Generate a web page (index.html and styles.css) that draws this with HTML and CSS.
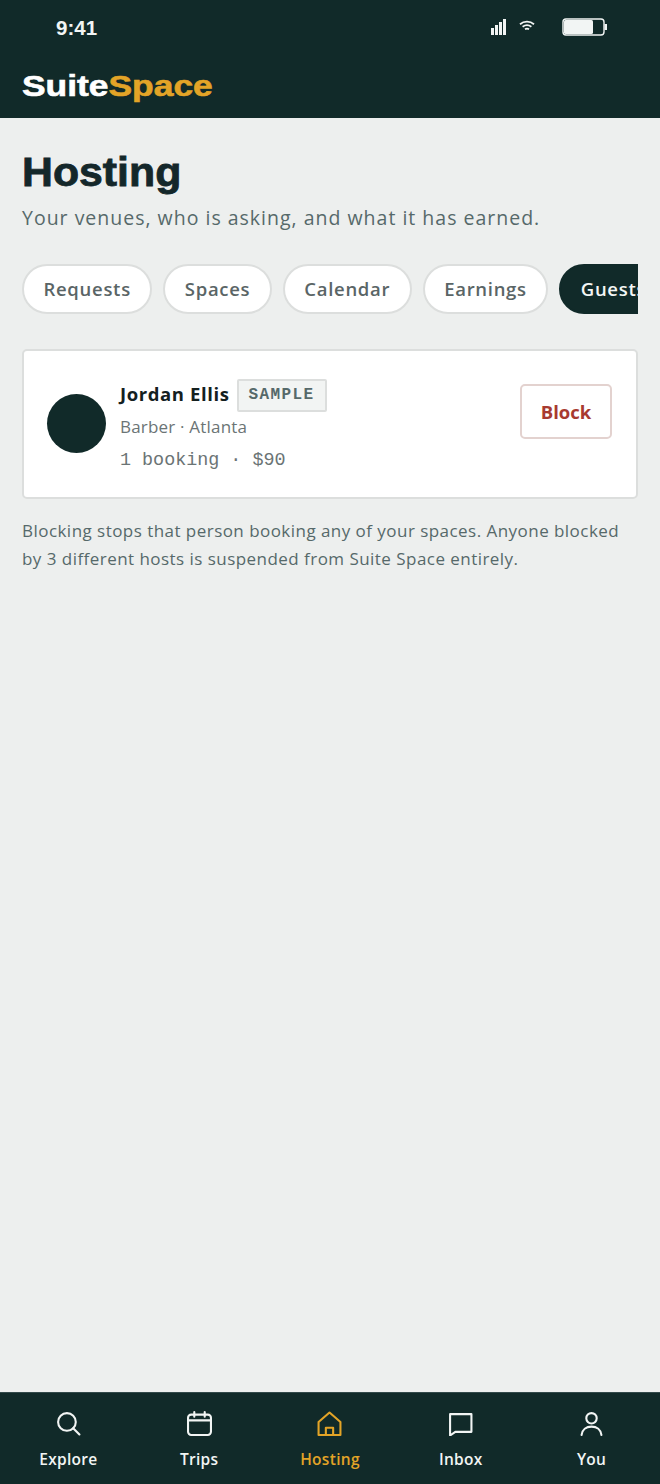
FILE: index.html
```html
<!DOCTYPE html>
<html lang="en">
<head>
    <meta charset="UTF-8">
    <meta name="viewport" content="width=device-width, initial-scale=1.0">
    <title>Hosting</title>
    <link rel="stylesheet" href="styles.css">
</head>
<body>
    <div class="app">
        <header class="top">
            <div class="status">
                <span class="time">9:41</span>
                <div class="status-icons">
                    <svg class="signal" width="16" height="16" viewBox="0 0 16 16"><path d="M0 9h3v7H0zM4 6h3v10H4zM8 3h3v13H8zM12 0h3v16h-3z" fill="#f2f5f4"/></svg>
                    <svg class="wifi" width="16" height="12" viewBox="0 0 16 12" fill="none" stroke="#f2f5f4" stroke-width="1.8"><path d="M1 4.200c4-3.400 10-3.400 14 0"/><path d="M3.600 6.800c2.600-2 6.200-2 8.800 0"/><path d="M6 9.300c1.200-.8 2.800-.8 4 0"/></svg>
                    <svg class="battery" width="45" height="18" viewBox="0 0 45 18"><rect x="1" y="1" width="41" height="16" rx="3" fill="none" stroke="#f2f5f4" stroke-width="1.4"/><rect x="2" y="2" width="29" height="14" rx="1.500" fill="#f2f5f4"/><path d="M42.500 6h2.500v6h-2.500z" fill="#f2f5f4"/></svg>
                </div>
            </div>
            <div class="brand"><span class="brand-inner">Suite<span class="brand-accent">Space</span></span></div>
        </header>

        <main class="content">
            <h1 class="title"><span class="title-inner">Hosting</span></h1>
            <p class="subtitle">Your venues, who is asking, and what it has earned.</p>

            <div class="tabs">
                <span class="tab">Requests</span>
                <span class="tab">Spaces</span>
                <span class="tab">Calendar</span>
                <span class="tab">Earnings</span>
                <span class="tab tab-active">Guests</span>
            </div>

            <section class="card">
                <div class="avatar"></div>
                <div class="guest">
                    <div class="guest-head">
                        <span class="guest-name">Jordan Ellis</span>
                        <span class="badge">SAMPLE</span>
                    </div>
                    <div class="guest-role">Barber · Atlanta</div>
                    <div class="guest-stats">1 booking · $90</div>
                </div>
                <button class="block-btn" type="button">Block</button>
            </section>

            <p class="note">Blocking stops that person booking any of your spaces. Anyone blocked by 3 different hosts is suspended from Suite Space entirely.</p>
        </main>

        <nav class="nav">
            <a class="nav-item">
                <svg viewBox="0 0 24 24"><circle cx="10.500" cy="10.500" r="8.500"/><path d="M16.500 16.500l6 6"/></svg>
                <span>Explore</span>
            </a>
            <a class="nav-item">
                <svg viewBox="0 0 24 24"><rect x="1" y="3.500" width="22" height="19.500" rx="3"/><path d="M1 9h22M7 1v4.500M17 1v4.500"/></svg>
                <span>Trips</span>
            </a>
            <a class="nav-item nav-active">
                <svg viewBox="0 0 24 24"><path d="M1.500 23V10.500L12 1.500l10.500 9V23z"/><path d="M8.500 23v-7h7v7"/></svg>
                <span>Hosting</span>
            </a>
            <a class="nav-item">
                <svg viewBox="0 0 24 24"><path d="M2 3h20.500v17H7l-5 3.500z"/></svg>
                <span>Inbox</span>
            </a>
            <a class="nav-item">
                <svg viewBox="0 0 24 24"><circle cx="12" cy="7" r="5"/><path d="M2.500 23c.5-5 4.500-8 9.500-8s9 3 9.500 8"/></svg>
                <span>You</span>
            </a>
        </nav>
    </div>
</body>
</html>
```

FILE: styles.css
```css
* {
    box-sizing: border-box;
}
body {
    margin: 0;
    font-family: "Open Sans", "Lato", sans-serif;
    background-color: #edefee;
    color: #14272a;
}
.app {
    width: 660px;
    height: 1484px;
    display: flex;
    flex-direction: column;
}
.top {
    height: 118px;
    background-color: #112a29;
    padding: 0 22px;
    flex: none;
}
.status {
    height: 68px;
    padding: 14px 31px 0 34px;
    display: flex;
    justify-content: space-between;
    align-items: flex-start;
}
.time {
    font-family: "Liberation Sans", Arial, sans-serif;
    font-weight: 700;
    font-size: 20.500px;
    line-height: 28px;
    color: #f2f5f4;
}
.status-icons {
    display: flex;
    align-items: center;
    height: 26px;
}
.signal {
    margin-right: 12px;
}
.wifi {
    margin-right: 27px;
    margin-top: -3px;
}
.brand {
    font-family: "Liberation Sans", Arial, sans-serif;
    font-weight: 700;
    font-size: 29px;
    line-height: 36px;
    color: #fff;
}
.brand-inner {
    display: inline-block;
    transform: scaleX(1.22);
    transform-origin: left center;
    -webkit-text-stroke: 0.6px currentColor;
}
.brand-accent {
    color: #e3a427;
}
.content {
    flex: 1;
    padding: 30px 22px 0;
}
.title {
    margin: 0;
    font-family: "Liberation Sans", Arial, sans-serif;
    font-weight: 700;
    font-size: 40px;
    line-height: 48px;
    color: #14272a;
}
.title-inner {
    display: inline-block;
    transform: scaleX(1.07);
    transform-origin: left center;
    -webkit-text-stroke: 0.8px currentColor;
}
.subtitle {
    margin: 8px 0 0;
    font-size: 19.500px;
    line-height: 28px;
    letter-spacing: 1px;
    color: #56696a;
}
.tabs {
    display: flex;
    gap: 11px;
    margin-top: 32px;
    height: 50px;
    overflow: hidden;
}
.tab {
    flex: none;
    height: 50px;
    padding: 0 19.500px;
    border: 2px solid #dcdedd;
    border-radius: 25px;
    background-color: #fff;
    font-size: 18.500px;
    font-weight: 600;
    line-height: 46px;
    letter-spacing: 0.7px;
    color: #5a6566;
}
.tab-active {
    background-color: #112a29;
    border-color: #112a29;
    color: #f4f6f5;
}
.card {
    display: flex;
    align-items: flex-start;
    height: 150px;
    margin-top: 35px;
    padding: 28px 24px 0 23px;
    background-color: #fff;
    border: 2px solid #dcdedd;
    border-radius: 5px;
}
.avatar {
    width: 59px;
    height: 59px;
    margin-top: 15px;
    border-radius: 50%;
    background-color: #112a29;
    flex: none;
}
.guest {
    flex: 1;
    margin-left: 14px;
}
.guest-head {
    display: flex;
    align-items: center;
    gap: 7px;
}
.guest-name {
    margin-bottom: 4px;
    font-size: 18.500px;
    font-weight: 700;
    letter-spacing: 0.6px;
    color: #14201f;
}
.badge {
    font-family: "Liberation Mono", monospace;
    font-weight: 700;
    font-size: 16px;
    line-height: 29px;
    height: 33px;
    padding: 0 10px;
    letter-spacing: 1.400px;
    color: #56696a;
    background-color: #f2f4f3;
    border: 2px solid #dcdedd;
    border-radius: 2px;
}
.guest-role {
    margin-top: 2px;
    font-size: 17px;
    line-height: 26px;
    letter-spacing: 0.2px;
    color: #6b7475;
}
.guest-stats {
    margin-top: 8px;
    font-family: "Liberation Mono", monospace;
    font-size: 18.400px;
    line-height: 26px;
    color: #6b7475;
}
.block-btn {
    width: 92px;
    height: 55px;
    margin-top: 5px;
    padding: 0;
    flex: none;
    background-color: #fff;
    border: 2px solid #e3d2cf;
    border-radius: 5px;
    font-family: inherit;
    font-size: 18.500px;
    font-weight: 700;
    color: #a83a30;
}
.note {
    margin: 18px 0 0;
    font-size: 17px;
    line-height: 28px;
    letter-spacing: 0.46px;
    color: #56696a;
}
.nav {
    flex: none;
    height: 92px;
    display: grid;
    grid-template-columns: repeat(5, 1fr);
    padding: 0 3px;
    background-color: #112a29;
    border-top: 1px solid #33494a;
}
.nav-item {
    display: flex;
    flex-direction: column;
    align-items: center;
    padding-top: 18px;
    color: #f2f5f4;
    font-size: 15.500px;
    font-weight: 600;
    letter-spacing: 0.3px;
}
.nav-item svg {
    width: 25px;
    height: 25px;
    fill: none;
    stroke: currentColor;
    stroke-width: 2;
    stroke-linecap: round;
    stroke-linejoin: round;
}
.nav-item span {
    margin-top: 12px;
    line-height: 22px;
}
.nav-active {
    color: #e3a427;
}
```
